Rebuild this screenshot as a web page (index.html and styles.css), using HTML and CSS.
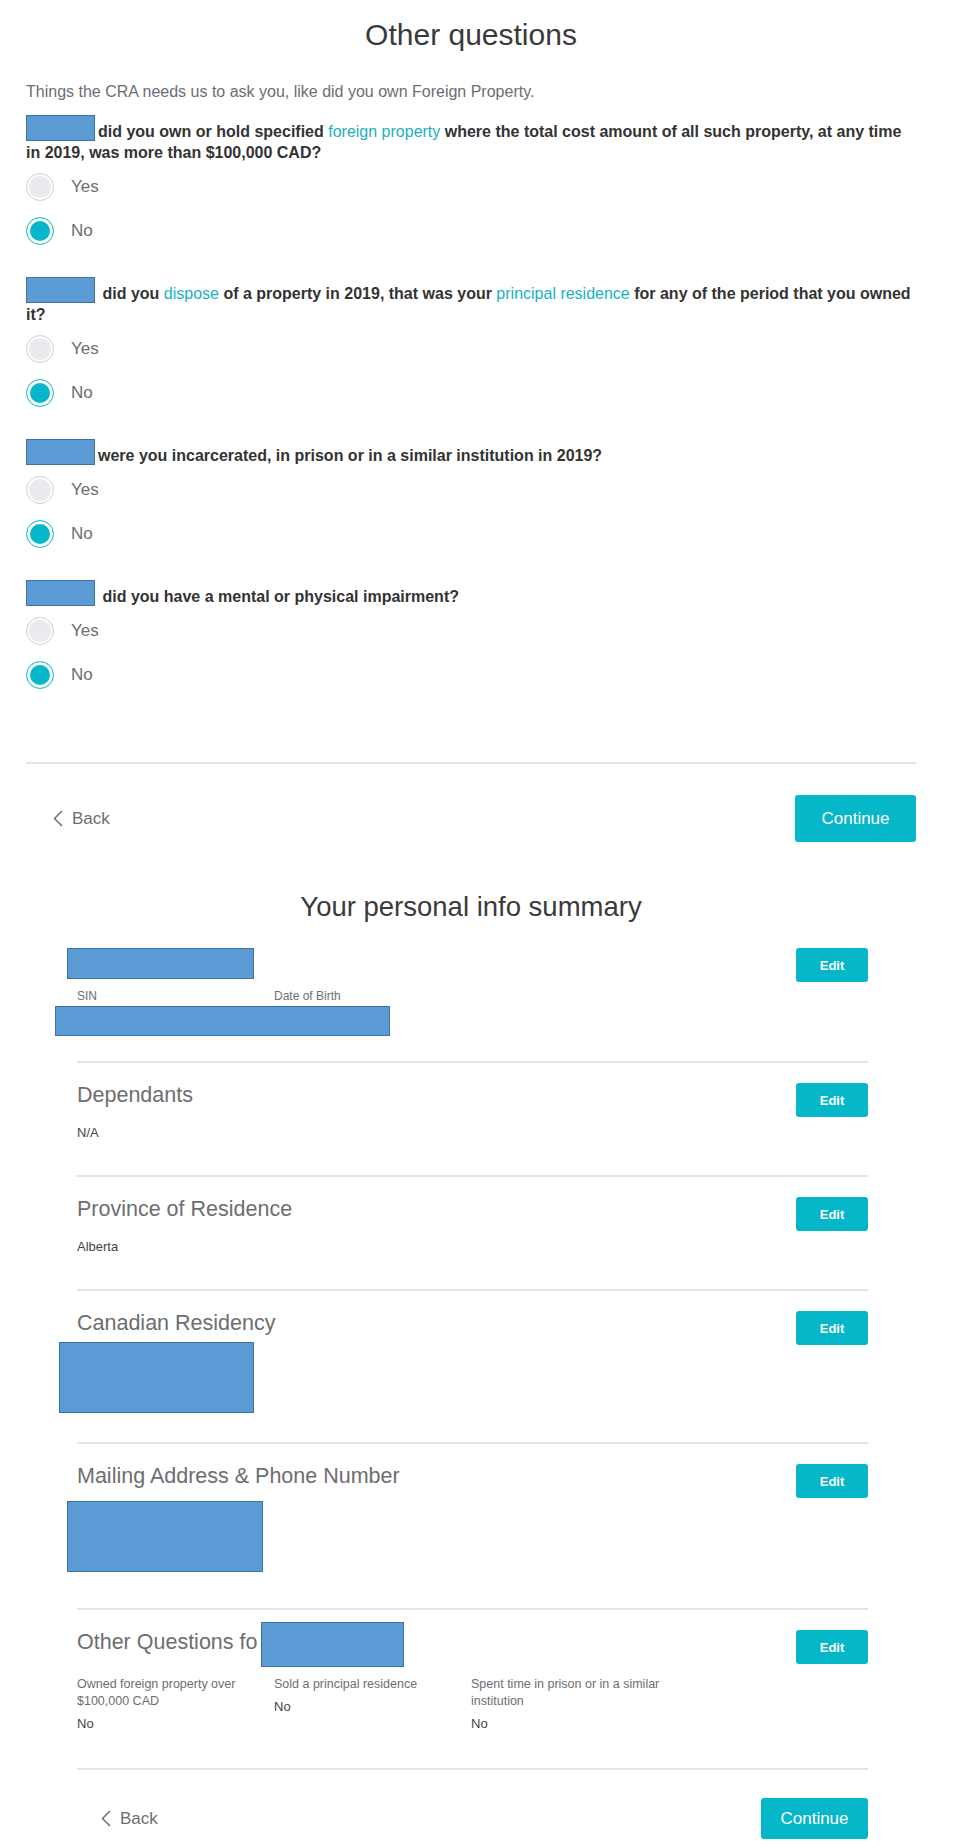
FILE: index.html
```html
<!DOCTYPE html>
<html lang="en">
<head>
    <meta charset="UTF-8">
    <meta name="viewport" content="width=device-width, initial-scale=1.0">
    <title>Other questions</title>
    <link rel="stylesheet" href="styles.css">
</head>
<body>
    <div class="page">
        <h1 class="page-title">Other questions</h1>
        <p class="intro">Things the CRA needs us to ask you, like did you own Foreign Property.</p>

        <div class="question">
            <p class="question-text"><span class="redact redact-q"></span>did you own or hold specified <a href="#">foreign property</a> where the total cost amount of all such property, at any time in 2019, was more than $100,000 CAD?</p>
            <label class="option"><span class="radio"></span>Yes</label>
            <label class="option"><span class="radio checked"></span>No</label>
        </div>

        <div class="question">
            <p class="question-text"><span class="redact redact-q"></span> did you <a href="#">dispose</a> of a property in 2019, that was your <a href="#">principal residence</a> for any of the period that you owned it?</p>
            <label class="option"><span class="radio"></span>Yes</label>
            <label class="option"><span class="radio checked"></span>No</label>
        </div>

        <div class="question">
            <p class="question-text"><span class="redact redact-q"></span>were you incarcerated, in prison or in a similar institution in 2019?</p>
            <label class="option"><span class="radio"></span>Yes</label>
            <label class="option"><span class="radio checked"></span>No</label>
        </div>

        <div class="question">
            <p class="question-text"><span class="redact redact-q"></span> did you have a mental or physical impairment?</p>
            <label class="option"><span class="radio"></span>Yes</label>
            <label class="option"><span class="radio checked"></span>No</label>
        </div>

        <div class="nav nav-top">
            <a href="#" class="back">
                <svg width="10" height="17" viewBox="0 0 10 17"><path d="M9 1 L1.5 8.5 L9 16" fill="none" stroke="#6d6e71" stroke-width="1.5"/></svg>
                Back
            </a>
            <button class="continue">Continue</button>
        </div>

        <h2 class="page-title summary-title">Your personal info summary</h2>

        <div class="summary">
            <div class="section section-first">
                <div class="section-head">
                    <span class="redact redact-name"></span>
                    <button class="edit">Edit</button>
                </div>
                <div class="id-labels">
                    <span class="id-col">SIN</span>
                    <span class="id-col">Date of Birth</span>
                </div>
                <span class="redact redact-id"></span>
            </div>

            <div class="section">
                <div class="section-head">
                    <h3>Dependants</h3>
                    <button class="edit">Edit</button>
                </div>
                <p class="value">N/A</p>
            </div>

            <div class="section">
                <div class="section-head">
                    <h3>Province of Residence</h3>
                    <button class="edit">Edit</button>
                </div>
                <p class="value">Alberta</p>
            </div>

            <div class="section section-block">
                <div class="section-head">
                    <h3>Canadian Residency</h3>
                    <button class="edit">Edit</button>
                </div>
                <span class="redact redact-res"></span>
            </div>

            <div class="section section-block section-mail">
                <div class="section-head">
                    <h3>Mailing Address &amp; Phone Number</h3>
                    <button class="edit">Edit</button>
                </div>
                <span class="redact redact-mail"></span>
            </div>

            <div class="section section-other">
                <div class="section-head">
                    <h3>Other Questions fo<span class="redact redact-for"></span></h3>
                    <button class="edit">Edit</button>
                </div>
                <div class="answers">
                    <div class="answer">
                        <span class="answer-label">Owned foreign property over $100,000 CAD</span>
                        <span class="answer-value">No</span>
                    </div>
                    <div class="answer">
                        <span class="answer-label">Sold a principal residence</span>
                        <span class="answer-value">No</span>
                    </div>
                    <div class="answer answer-wide">
                        <span class="answer-label">Spent time in prison or in a similar institution</span>
                        <span class="answer-value">No</span>
                    </div>
                </div>
            </div>

            <div class="nav nav-bottom">
                <a href="#" class="back">
                    <svg width="10" height="17" viewBox="0 0 10 17"><path d="M9 1 L1.5 8.5 L9 16" fill="none" stroke="#6d6e71" stroke-width="1.5"/></svg>
                    Back
                </a>
                <button class="continue continue-small">Continue</button>
            </div>
        </div>
    </div>
</body>
</html>
```

FILE: styles.css
```css
body {
    font-family: 'Liberation Sans', Arial, sans-serif;
    background-color: #ffffff;
    color: #333;
    margin: 0;
    padding: 0;
}

.page {
    width: 890px;
    margin-left: 26px;
}

.page-title {
    font-size: 30px;
    font-weight: normal;
    line-height: 34px;
    color: #3a3a3c;
    text-align: center;
    margin: 18px 0 0;
}

.intro {
    font-size: 16px;
    line-height: 20px;
    color: #6d6e71;
    margin: 30px 0 19px;
}

/* Redaction boxes */
.redact {
    display: inline-block;
    background-color: #5b9bd5;
    border: 1px solid #41719c;
    box-sizing: border-box;
}

.redact-q {
    width: 69px;
    height: 26px;
    margin: -6px 3px -4px 0;
    vertical-align: baseline;
}

.question {
    margin-bottom: 30px;
}

.question-text {
    font-size: 16px;
    font-weight: bold;
    line-height: 21px;
    color: #333;
    margin: 0 0 2px;
}

.question-text a {
    color: #1ab0c2;
    font-weight: normal;
    text-decoration: none;
}

.option {
    display: flex;
    align-items: center;
    height: 44px;
    gap: 17px;
    font-size: 17px;
    color: #6d6e71;
}

.radio {
    width: 28px;
    height: 28px;
    border-radius: 50%;
    box-sizing: border-box;
    border: 1.5px solid #d3d3d8;
    background-color: #ebebef;
    box-shadow: inset 0 0 0 2px #fff;
}

.radio.checked {
    border: 1.5px solid #35c1d1;
    background-color: #06b6c9;
    box-shadow: inset 0 0 0 3px #fff;
}

.nav {
    display: flex;
    justify-content: space-between;
    align-items: center;
    border-top: 2px solid #e4e4e8;
}

.nav-top {
    margin-top: 65px;
    padding-top: 31px;
}

.back {
    display: flex;
    align-items: center;
    gap: 9px;
    font-size: 17px;
    color: #6d6e71;
    text-decoration: none;
    padding-left: 27px;
}

.continue {
    font-family: inherit;
    background-color: #06b6c9;
    color: #fff;
    border: none;
    border-radius: 3px;
    font-size: 17px;
    width: 121px;
    height: 47px;
    cursor: pointer;
}

.summary-title {
    font-size: 27.5px;
    margin-top: 48px;
}

.summary {
    margin: 24px 48px 0 51px;
}

.section {
    border-bottom: 2px solid #e4e4e8;
    padding: 20px 0 34px;
}

.section-first {
    padding: 0 0 21px;
}

.section-head {
    display: flex;
    justify-content: space-between;
    align-items: flex-start;
}

.section-head h3 {
    font-size: 21.5px;
    font-weight: normal;
    line-height: 24px;
    color: #6d6e71;
    margin: 0;
}

.edit {
    font-family: inherit;
    background-color: #06b6c9;
    color: #fff;
    border: none;
    border-radius: 3px;
    font-size: 13px;
    font-weight: bold;
    width: 72px;
    height: 34px;
    cursor: pointer;
}

.redact-name {
    width: 187px;
    height: 31px;
    margin-left: -10px;
}

.id-labels {
    display: flex;
    font-size: 12px;
    line-height: 16px;
    color: #6d6e71;
    margin-top: 6px;
}

.id-col {
    width: 197px;
}

.redact-id {
    width: 335px;
    height: 30px;
    margin: 2px 0 0 -22px;
}

.value {
    font-size: 13px;
    line-height: 16px;
    color: #444;
    margin: 8px 0 0;
}

.section-block {
    padding-bottom: 29px;
}

.section-block .redact {
    display: block;
}

.section-mail {
    padding-bottom: 36px;
}

.redact-res {
    width: 195px;
    height: 71px;
    margin: -3px 0 0 -18px;
}

.redact-mail {
    width: 196px;
    height: 71px;
    margin: 3px 0 0 -10px;
}

.redact-for {
    width: 143px;
    height: 45px;
    margin: -13px 0 -18px 4px;
    vertical-align: baseline;
}

.section-other {
    padding-bottom: 36px;
}

.answers {
    display: flex;
    margin-top: 12px;
}

.answer {
    width: 197px;
    display: flex;
    flex-direction: column;
}

.answer-wide {
    width: 240px;
}

.answer-label {
    font-size: 12.5px;
    line-height: 17px;
    color: #6d6e71;
}

.answer-wide .answer-label {
    width: 205px;
}

.answer-value {
    font-size: 13px;
    line-height: 17px;
    color: #444;
    margin-top: 5px;
}

.nav-bottom {
    border-top: none;
    padding-top: 28px;
}

.nav-bottom .back {
    padding-left: 24px;
}

.continue-small {
    width: 107px;
    height: 41px;
}
```
